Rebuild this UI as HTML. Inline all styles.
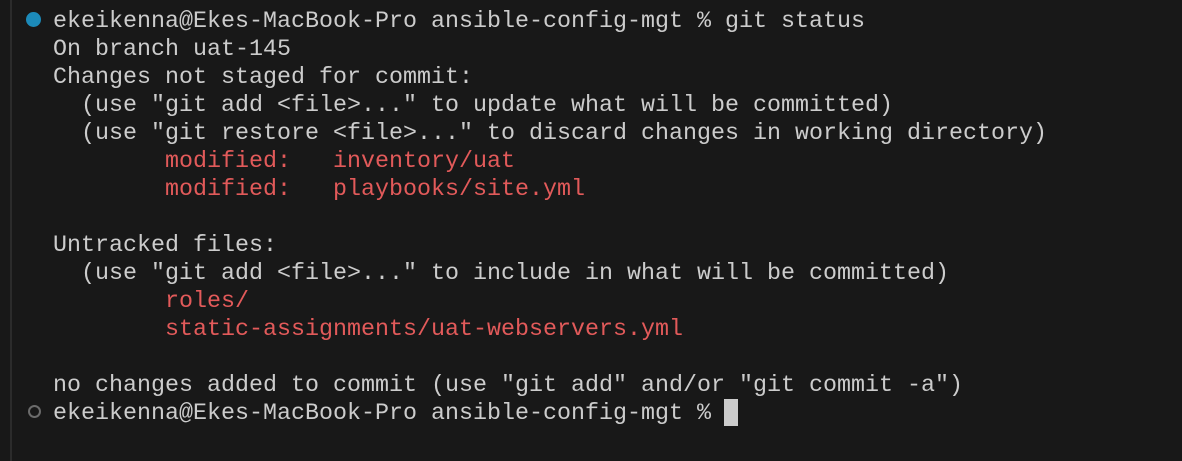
<!DOCTYPE html>
<html><head><style>
html,body{margin:0;padding:0;background:#181818;width:1182px;height:461px;overflow:hidden}
.bar{position:absolute;left:10px;top:0;width:2px;height:461px;background:#2b2b2b}
pre{position:absolute;left:53px;top:8px;margin:0;font-family:"Liberation Mono",monospace;font-size:23.33px;line-height:28px;color:#cccccc}
.r{color:#e25a5a}
.dot{position:absolute;left:26px;top:12px;width:15px;height:15px;border-radius:50%;background:#1c8ab9}
.ring{position:absolute;left:28px;top:405px;width:9px;height:9px;border-radius:50%;border:2px solid #6b6b6b}
.cur{position:absolute;left:724px;top:399px;width:14px;height:27px;background:#cccccc}
</style></head><body>
<div class="bar"></div>
<div class="dot"></div>
<div class="ring"></div>
<pre>ekeikenna@Ekes-MacBook-Pro ansible-config-mgt % git status
On branch uat-145
Changes not staged for commit:
  (use "git add &lt;file&gt;..." to update what will be committed)
  (use "git restore &lt;file&gt;..." to discard changes in working directory)
        <span class="r">modified:   inventory/uat</span>
        <span class="r">modified:   playbooks/site.yml</span>

Untracked files:
  (use "git add &lt;file&gt;..." to include in what will be committed)
        <span class="r">roles/</span>
        <span class="r">static-assignments/uat-webservers.yml</span>

no changes added to commit (use "git add" and/or "git commit -a")
ekeikenna@Ekes-MacBook-Pro ansible-config-mgt % </pre>
<div class="cur"></div>
</body></html>
